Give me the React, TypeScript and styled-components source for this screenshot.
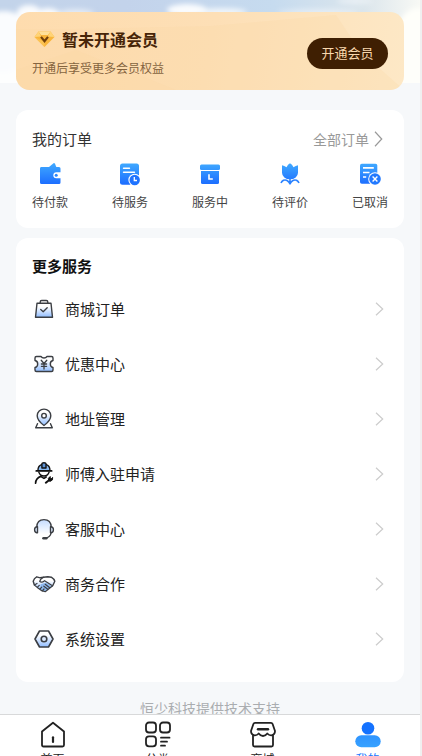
import React from 'react';
import styled, { createGlobalStyle } from 'styled-components';

const GlobalStyle = createGlobalStyle`
  * { box-sizing: border-box; }
  html, body, #root { height: 100%; }
  body {
    margin: 0;
    background: #f6f8fa;
    font-family: "Noto Sans CJK SC", "Noto Sans", sans-serif;
    color: #222;
    overflow: hidden;
  }
  button { font-family: inherit; border: 0; padding: 0; background: none; color: inherit; cursor: pointer; }
  a { color: inherit; text-decoration: none; }
  h2, p, ul { margin: 0; padding: 0; }
  ul { list-style: none; }
  svg { display: block; flex: none; }
`;

const Screen = styled.div`
  height: 100vh;
  display: flex;
  flex-direction: column;
  border-right: 2px solid #f0f0f0;
`;

const Content = styled.main`
  flex: 1;
  min-height: 0;
  overflow: hidden;
  position: relative;
`;

const Sky = styled.div`
  position: absolute;
  inset: 0 0 auto 0;
  height: 83px;
  svg { width: 100%; height: 100%; }
`;

const Stack = styled.div`
  position: relative;
  display: flex;
  flex-direction: column;
  padding: 12px 16px 0;
`;

const MemberCard = styled.section`
  position: relative;
  overflow: hidden;
  height: 78px;
  border-radius: 14px;
  background: linear-gradient(100deg, #fedcae 0%, #fddfb6 50%, #fde8c6 100%);
  display: flex;
  align-items: center;
  justify-content: space-between;
  padding: 0 16px;
  margin-bottom: 20px;
`;

const CardShade = styled.svg`
  position: absolute;
  inset: 0;
  width: 100%;
  height: 100%;
`;

const MemberText = styled.div`
  position: relative;
  display: flex;
  flex-direction: column;
  gap: 8px;
  padding-top: 2px;
`;

const MemberTitle = styled.h2`
  display: flex;
  align-items: center;
  gap: 7px;
  padding-left: 2px;
  font-size: 16px;
  line-height: 24px;
  font-weight: 700;
  color: #472508;
`;

const MemberHint = styled.p`
  font-size: 12px;
  line-height: 18px;
  color: #85643f;
`;

const OpenButton = styled.button`
  && {
    position: relative;
    width: 81px;
    height: 31px;
    margin-top: 4px;
    border-radius: 16px;
    background: #3f1f02;
    color: #f8d8ae;
    font-size: 13px;
    line-height: 20px;
  }
`;

const Card = styled.section`
  background: #fff;
  border-radius: 12px;
  padding: 16px;
  margin-bottom: 10px;
`;

const CardHead = styled.div`
  display: flex;
  align-items: center;
  justify-content: space-between;
  height: 26px;
`;

const CardTitle = styled.h2<{ $bold?: boolean }>`
  font-size: 15px;
  line-height: 24px;
  font-weight: ${(p) => (p.$bold ? 700 : 400)};
  color: ${(p) => (p.$bold ? '#111' : '#333')};
`;

const AllOrders = styled.a`
  display: flex;
  align-items: center;
  gap: 5px;
  padding-right: 5px;
  font-size: 14px;
  line-height: 24px;
  color: #999;
`;

const OrderStates = styled.ul`
  display: flex;
  justify-content: space-between;
  padding: 10px 0 0;
`;

const OrderState = styled.a`
  display: flex;
  flex-direction: column;
  align-items: center;
  gap: 6px;
  width: 36px;
  font-size: 12px;
  line-height: 20px;
  color: #444;
  white-space: nowrap;
`;

const ServiceList = styled.ul`
  padding: 3px 0 0;
`;

const ServiceRow = styled.a`
  display: flex;
  align-items: center;
  height: 55px;
  padding-right: 4px;
  font-size: 15px;
  line-height: 24px;
  color: #222;
`;

const ServiceName = styled.span`
  flex: 1;
  margin-left: 9px;
`;

const Support = styled.p`
  padding-top: 5px;
  text-align: center;
  font-size: 14px;
  line-height: 22px;
  color: #aaadb0;
`;

const TabBar = styled.nav`
  flex: none;
  display: grid;
  grid-template-columns: repeat(4, 1fr);
  height: 42px;
  overflow: hidden;
  background: #fff;
  border-top: 1px solid #d8d9da;
`;

const Tab = styled.a<{ $active?: boolean }>`
  display: flex;
  flex-direction: column;
  align-items: center;
  padding-top: 5px;
  font-size: 12px;
  line-height: 18px;
  color: ${(p) => (p.$active ? '#1677ff' : '#222')};
`;

const Chevron = ({ color, height = 14 }: { color: string; height?: number }) => (
  <svg width="9" height={height} viewBox="0 0 9 14" preserveAspectRatio="none" fill="none" stroke={color} strokeWidth="1.2">
    <path d="M1 .7 7.7 7 1 13.3" />
  </svg>
);

const BlueIcon = ({ children }: { children: React.ReactNode }) => (
  <svg width="24" height="24" viewBox="0 0 24 24" fill="url(#blue)">{children}</svg>
);

const Wallet = () => (
  <BlueIcon>
    <path d="M11 5 15.5 1.2Q16.5.8 17 1.8L18.3 5Z" />
    <path d="M3 5H21Q22.5 5 22.5 6.5V10.3H18.3A3 3 0 0 0 18.3 16.3H22.5V20.5Q22.5 22 21 22H3.5Q2 22 2 20.5V6.5Q2 5 3 5Z" />
    <circle cx="18.2" cy="13.3" r="1.5" />
  </BlueIcon>
);

const DocClock = () => (
  <BlueIcon>
    <rect x="2" y="1.5" width="19" height="21.3" rx="2.5" />
    <path d="M5.5 6.3h6M5.5 10.3h11" stroke="#fff" strokeWidth="1.4" strokeLinecap="round" />
    <circle cx="16.7" cy="18" r="6.3" fill="#fff" />
    <circle cx="16.7" cy="18" r="5.2" fill="#1f73ff" />
    <path d="M16.3 15v3.5H19" fill="none" stroke="#fff" strokeWidth="1.3" />
  </BlueIcon>
);

const BoxClock = () => (
  <BlueIcon>
    <rect x="2" y="2.5" width="20" height="5.5" rx="1.5" />
    <path d="M3 9H21V20.5Q21 22 19.5 22H4.5Q3 22 3 20.5Z" />
    <path d="M11 12.2v4.8H14.8" fill="none" stroke="#fff" strokeWidth="1.6" />
  </BlueIcon>
);

const Tulip = () => (
  <BlueIcon>
    <path d="M12 1.3Q14.2 2.3 15.5 5.2Q17.7 3.5 20 3.2V10.8A8 6.5 0 0 1 4 10.8V3.2Q6.3 3.5 8.5 5.2Q9.8 2.3 12 1.3Z" />
    <path d="M12 16V22.5M12 22Q9.5 17 5.5 18.2Q3.8 19.2 3 21M12 22Q14.5 17 18.5 18.2Q20.2 19.2 21 21" fill="none" stroke="#2a82ff" strokeWidth="1.6" />
  </BlueIcon>
);

const DocCancel = () => (
  <BlueIcon>
    <rect x="2" y="1.7" width="17.3" height="20" rx="1.8" />
    <path d="M5 5.8h10.8M5 10.5h6.5M5 15h3.2" stroke="#fff" strokeWidth="1.7" />
    <circle cx="17" cy="17" r="6.8" fill="#fff" />
    <circle cx="17" cy="17" r="5.8" fill="#2179ff" />
    <path d="m14.6 14.6 4.8 4.8m0-4.8-4.8 4.8" stroke="#fff" strokeWidth="1.4" />
  </BlueIcon>
);

const LineIcon = ({ children }: { children: React.ReactNode }) => (
  <svg width="24" height="24" viewBox="0 0 24 24" fill="none" stroke="#3b3e43" strokeWidth="1.4" strokeLinejoin="round" strokeLinecap="round">
    {children}
  </svg>
);

const Bag = () => (
  <LineIcon>
    <path d="M5 6.3H19L20.5 20.3H3.5Z" fill="url(#pale)" />
    <path d="M8.2 6V5Q8.2 3.5 9.7 3.5H14.3Q15.8 3.5 15.8 5V6" />
    <path d="m8.7 12.4 2.5 2.3 4-4" strokeWidth="1.3" />
  </LineIcon>
);

const Coupon = () => (
  <LineIcon>
    <path d="M4.5 4.5H9Q10 6 12 6T15 4.5H19.5Q21 4.5 21 6V8.5Q18.3 9 18.3 12T21 15.5V18Q21 19.5 19.5 19.5H4.5Q3 19.5 3 18V15.5Q5.7 15 5.7 12T3 8.5V6Q3 4.5 4.5 4.5Z" fill="url(#pale)" />
    <path d="m9.2 8.3 2.8 3.2 2.8-3.2M12 11.5V17M9.4 12h5.2M9.4 14.3h5.2" strokeWidth="1.3" />
  </LineIcon>
);

const Pin = () => (
  <LineIcon>
    <path d="M12 18.5Q5.2 13.4 5.2 8.7A6.8 6.6 0 0 1 18.8 8.7Q18.8 13.4 12 18.5Z" fill="url(#pale)" />
    <circle cx="12" cy="8.7" r="2.3" fill="#fff" />
    <path d="M5.5 16.7 3.7 20.8H20.3L18.5 16.7" />
  </LineIcon>
);

const Worker = () => (
  <LineIcon>
    <g stroke="#111" strokeWidth="1.5" transform="translate(.8 -.2) scale(.93)">
      <path d="M5.5 9.5Q5.5 4 10 2.8H14Q18.5 4 18.5 9.5Z" fill="#8abaf2" />
      <path d="M9.8 6.7V2.2Q9.8 1 12 1T14.2 2.2V6.7Z" fill="#5d93d6" />
      <path d="M3.7 9.8H20.3" strokeWidth="1.8" />
      <path d="M6.5 11.3Q8 15.3 12 15.3T17.5 11.3" />
      <path d="M3 23Q3.3 17.7 8.5 15.7L12 17.8 14.3 16.3" strokeWidth="1.8" />
      <path d="m14 22.5 4-3.2" strokeWidth="2.2" />
      <path d="M17.3 20.3 16.7 17.8 18.7 15.8 18.8 17.8 20.8 18.2 21.3 16.7 21.2 19.4 19.2 20.8Z" fill="#111" strokeWidth="1" />
    </g>
  </LineIcon>
);

const Headset = () => (
  <LineIcon>
    <ellipse cx="12" cy="10.8" rx="7.3" ry="8" fill="url(#paleTop)" stroke="none" />
    <path d="M4.8 10Q5 2.6 12 2.6T19.2 10" />
    <path d="M5.5 9.8H4.7Q2.6 10.3 2.6 12.8T4.7 15.8H5.5ZM18.5 9.8H19.3Q21.4 10.3 21.4 12.8T19.3 15.8H18.5Z" fill="#dceaff" />
    <path d="M19 16Q18.5 20.2 13.3 21.1" />
    <path d="M11.5 21.2h2.8" strokeWidth="2.6" />
  </LineIcon>
);

const Handshake = () => (
  <LineIcon>
    <path d="M4.7 5.2 11.3 5.9 19.3 5.2 22.6 9.2 20.5 14.3 13.5 19.2 9.8 19 2.8 13.7 1.3 9.5Z" fill="url(#pale)" stroke="none" />
    <path d="M8.5 12.3 14 10.6 19.8 14.6 13.2 19.3 8.4 17.3Z" fill="#8fbaf0" stroke="none" />
    <path d="M2.3 12.8 1.2 9.3Q2.1 6.1 4.7 4.8L8.2 5.8 11.5 5.2 15.8 4.8 19.3 5.2Q22.2 7 22.8 9.3L20.7 13.8" />
    <path d="M11.5 5.2Q8.2 6.7 7.7 9.5 9.8 11 12.6 8.7L20.4 13.7M5 11.5 2.4 13 5.2 15.4 7.3 13.3M5.3 15.5 7.7 17.3 9.7 15.2M8 17.5 10.2 19.1 12 17M10.5 19 13.2 19.7 20.4 14M13.2 12.3 18 16M11.8 14.2 16.2 17.5" strokeWidth="1.2" />
  </LineIcon>
);

const HexSetting = () => (
  <LineIcon>
    <path d="M7.5 4H16.5L21 12 16.5 20H7.5L3 12Z" fill="url(#pale)" strokeWidth="1.6" />
    <circle cx="12" cy="12" r="2.8" fill="#dceaff" strokeWidth="1.6" />
  </LineIcon>
);

const TabIcon = ({ children }: { children: React.ReactNode }) => (
  <svg width="30" height="30" viewBox="0 0 30 30" fill="none" stroke="#222" strokeWidth="1.8" strokeLinejoin="round" strokeLinecap="round">
    {children}
  </svg>
);

const HomeIcon = () => (
  <TabIcon>
    <path d="M4 11.5 15 2.7 26 11.5V25Q26 26.5 24.5 26.5H5.5Q4 26.5 4 25Z" />
    <path d="M15 17.3V22" strokeWidth="2.2" />
  </TabIcon>
);

const CategoryIcon = () => (
  <TabIcon>
    <rect x="3" y="2.5" width="10" height="10" rx="3" />
    <rect x="17" y="2.5" width="10" height="10" rx="3" />
    <rect x="3" y="16.3" width="10" height="10" rx="3" />
    <path d="M18 17.7H26.5M18 21.7H24M18 25.7H22" />
  </TabIcon>
);

const ShopIcon = () => (
  <TabIcon>
    <path d="M7 2.8H23Q24.2 2.8 24.6 4L27 11Q27 14.5 23.5 15.3 21 15.5 19.3 13.5 17.5 16 15 16T10.7 13.5Q9 15.5 6.5 15.3 3 14.5 3 11L5.4 4Q5.8 2.8 7 2.8Z" />
    <path d="M5 15.5V25Q5 26.5 6.5 26.5H23.5Q25 26.5 25 25V15.5" />
    <path d="M10 9.3H20" strokeWidth="2.4" />
  </TabIcon>
);

const MeIcon = () => (
  <svg width="30" height="30" viewBox="0 0 30 30">
    <circle cx="15" cy="8.3" r="6.3" fill="#1472ff" />
    <rect x="2.3" y="15.3" width="25.4" height="12" rx="6" fill="url(#me)" />
  </svg>
);

const Diamond = () => (
  <svg width="21" height="18" viewBox="0 0 21 18">
    <path d="M4.5 1.5H16.5L20.5 7 10.5 17 .5 7Z" fill="#f9b53c" />
    <path d="M4.5 1.5 7 6.5.5 7ZM16.5 1.5 14 6.5 20.5 7Z" fill="#ffd477" />
    <path d="M4.5 1.5H16.5L14 5H7Z" fill="#ffe09a" />
    <path d="M.5 7 10.5 17V12Z" fill="#fbc354" />
    <path d="m7 6.8 3.5 4.4L14 6.8" fill="none" stroke="#70400c" strokeWidth="2.1" />
  </svg>
);

const GradientDefs = styled.svg`
  position: absolute;
`;

const Gradients = () => (
  <GradientDefs width="0" height="0" aria-hidden="true">
    <defs>
      <linearGradient id="blue" gradientUnits="userSpaceOnUse" x1="0" y1="1" x2="0" y2="23">
        <stop offset="0" stopColor="#40aaff" /><stop offset="1" stopColor="#1b6bff" />
      </linearGradient>
      <linearGradient id="pale" x1="0" y1="0" x2="0" y2="1">
        <stop offset=".25" stopColor="#fff" /><stop offset="1" stopColor="#8fbcff" />
      </linearGradient>
      <linearGradient id="paleTop" x1="0" y1="0" x2="0" y2="1">
        <stop offset="0" stopColor="#c5dcff" /><stop offset=".9" stopColor="#fff" />
      </linearGradient>
      <linearGradient id="me" x1="0" y1="0" x2="0" y2="1">
        <stop offset="0" stopColor="#2f93ff" /><stop offset="1" stopColor="#36a2ff" />
      </linearGradient>
    </defs>
  </GradientDefs>
);

const SkyPicture = () => (
  <svg viewBox="0 0 420 83" preserveAspectRatio="none" aria-hidden="true">
    <defs>
      <linearGradient id="sky" x1="0" x2="1" y1="0" y2="0">
        <stop offset="0" stopColor="#c3d4ea" /><stop offset=".3" stopColor="#c3d3eb" />
        <stop offset=".65" stopColor="#c6dbef" /><stop offset=".87" stopColor="#dce6ec" /><stop offset="1" stopColor="#f8f9f5" />
      </linearGradient>
      <filter id="soft" x="-20%" y="-50%" width="140%" height="200%"><feGaussianBlur stdDeviation="2.5" /></filter>
    </defs>
    <rect width="420" height="83" fill="url(#sky)" />
    <rect y="45" width="420" height="38" fill="#fdfefe" />
    <g fill="#fafcfe" filter="url(#soft)">
      <ellipse cx="4" cy="24" rx="20" ry="13" />
      <ellipse cx="29" cy="13" rx="12" ry="8" />
      <ellipse cx="48" cy="15" rx="12" ry="7" />
      <ellipse cx="3" cy="50" rx="26" ry="22" />
      <ellipse cx="76" cy="13" rx="18" ry="4" opacity=".6" />
      <ellipse cx="187" cy="10" rx="20" ry="6" />
      <ellipse cx="222" cy="12" rx="25" ry="4" opacity=".8" />
      <ellipse cx="318" cy="12" rx="40" ry="3" opacity=".5" />
      <ellipse cx="355" cy="1" rx="18" ry="3" opacity=".5" />
      <ellipse cx="418" cy="38" rx="22" ry="30" fill="#fffffa" />
    </g>
    <rect x="400" y="20" width="20" height="63" fill="#fefefa" />
  </svg>
);

const orderStates = [
  { name: '待付款', Icon: Wallet },
  { name: '待服务', Icon: DocClock },
  { name: '服务中', Icon: BoxClock },
  { name: '待评价', Icon: Tulip },
  { name: '已取消', Icon: DocCancel },
];

const services = [
  { name: '商城订单', Icon: Bag },
  { name: '优惠中心', Icon: Coupon },
  { name: '地址管理', Icon: Pin },
  { name: '师傅入驻申请', Icon: Worker },
  { name: '客服中心', Icon: Headset },
  { name: '商务合作', Icon: Handshake },
  { name: '系统设置', Icon: HexSetting },
];

const tabs = [
  { name: '首页', Icon: HomeIcon },
  { name: '分类', Icon: CategoryIcon },
  { name: '商城', Icon: ShopIcon },
  { name: '我的', Icon: MeIcon, active: true },
];

export default function App() {
  return (
    <Screen>
      <GlobalStyle />
      <Gradients />
      <Content>
        <Sky><SkyPicture /></Sky>
        <Stack>
          <MemberCard>
            <CardShade viewBox="0 0 388 78" preserveAspectRatio="none" aria-hidden="true">
              <path d="M0 17H60L195 14 320 3 345 40 388 78H0Z" fill="#fdd7a4" opacity=".25" />
              <path d="M0 58 60 38 160 78H0Z" fill="#fcd6a2" opacity=".25" />
            </CardShade>
            <MemberText>
              <MemberTitle><Diamond />暂未开通会员</MemberTitle>
              <MemberHint>开通后享受更多会员权益</MemberHint>
            </MemberText>
            <OpenButton type="button">开通会员</OpenButton>
          </MemberCard>

          <Card>
            <CardHead>
              <CardTitle>我的订单</CardTitle>
              <AllOrders href="#orders">全部订单<Chevron color="#999" height={16} /></AllOrders>
            </CardHead>
            <OrderStates>
              {orderStates.map(({ name, Icon }) => (
                <li key={name}><OrderState href="#orders"><Icon />{name}</OrderState></li>
              ))}
            </OrderStates>
          </Card>

          <Card>
            <CardTitle $bold>更多服务</CardTitle>
            <ServiceList>
              {services.map(({ name, Icon }) => (
                <li key={name}>
                  <ServiceRow href="#service">
                    <Icon />
                    <ServiceName>{name}</ServiceName>
                    <Chevron color="#ccc" />
                  </ServiceRow>
                </li>
              ))}
            </ServiceList>
          </Card>

          <Support>恒少科技提供技术支持</Support>
        </Stack>
      </Content>
      <TabBar>
        {tabs.map(({ name, Icon, active }) => (
          <Tab key={name} href="#tab" $active={active}><Icon />{name}</Tab>
        ))}
      </TabBar>
    </Screen>
  );
}
